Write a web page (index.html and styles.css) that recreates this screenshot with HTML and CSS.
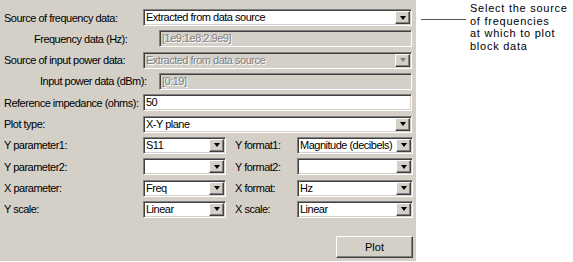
FILE: index.html
```html
<!DOCTYPE html>
<html>
<head>
<meta charset="utf-8">
<link rel="stylesheet" href="styles.css">
</head>
<body>
<div class="page">
  <div class="panel">
    <div class="row">
      <span class="lbl">Source of frequency data:</span>
      <div class="combo wide"><span class="val">Extracted from data source</span><span class="btn"><i class="tri"></i></span></div>
    </div>
    <div class="row">
      <span class="lbl ind1">Frequency data (Hz):</span>
      <div class="field dis narrow"><span class="val">[1e9:1e8:2.9e9]</span></div>
    </div>
    <div class="row">
      <span class="lbl">Source of input power data:</span>
      <div class="combo wide dis"><span class="val">Extracted from data source</span><span class="btn"><i class="tri"></i></span></div>
    </div>
    <div class="row">
      <span class="lbl ind2">Input power data (dBm):</span>
      <div class="field dis narrow"><span class="val">[0:19]</span></div>
    </div>
    <div class="row">
      <span class="lbl">Reference impedance (ohms):</span>
      <div class="field wide"><span class="val">50</span></div>
    </div>
    <div class="row">
      <span class="lbl">Plot type:</span>
      <div class="combo wide"><span class="val">X-Y plane</span><span class="btn"><i class="tri"></i></span></div>
    </div>
    <div class="row">
      <span class="lbl">Y parameter1:</span>
      <div class="combo small"><span class="val">S11</span><span class="btn"><i class="tri"></i></span></div>
      <span class="lbl2">Y format1:</span>
      <div class="combo right"><span class="val">Magnitude (decibels)</span><span class="btn"><i class="tri"></i></span></div>
    </div>
    <div class="row">
      <span class="lbl">Y parameter2:</span>
      <div class="combo small"><span class="val"></span><span class="btn"><i class="tri"></i></span></div>
      <span class="lbl2">Y format2:</span>
      <div class="combo right"><span class="val"></span><span class="btn"><i class="tri"></i></span></div>
    </div>
    <div class="row">
      <span class="lbl">X parameter:</span>
      <div class="combo small"><span class="val">Freq</span><span class="btn"><i class="tri"></i></span></div>
      <span class="lbl2">X format:</span>
      <div class="combo right"><span class="val">Hz</span><span class="btn"><i class="tri"></i></span></div>
    </div>
    <div class="row">
      <span class="lbl">Y scale:</span>
      <div class="combo small"><span class="val">Linear</span><span class="btn"><i class="tri"></i></span></div>
      <span class="lbl2">X scale:</span>
      <div class="combo right"><span class="val">Linear</span><span class="btn"><i class="tri"></i></span></div>
    </div>
    <div class="actions">
      <button class="plot">Plot</button>
    </div>
  </div>
  <div class="note">
    <span class="leader"></span>
    <p class="note-text">Select the source<br>of frequencies<br>at which to plot<br>block data</p>
  </div>
</div>
</body>
</html>
```
FILE: styles.css
```css
* { box-sizing: border-box; }
html, body { margin: 0; padding: 0; background: #fff; }
body {
  font-family: "Liberation Sans", Arial, sans-serif;
  font-size: 11px;
  color: #000;
  width: 573px;
  height: 262px;
  overflow: hidden;
}
.page { display: flex; align-items: flex-start; }
.panel {
  width: 416px;
  height: 261px;
  background: #d4d0c8;
  padding: 9px 0 0 0;
  display: flex;
  flex-direction: column;
}
.row {
  display: flex;
  align-items: center;
  height: 17px;
  margin-bottom: 4.33px;
}
.lbl {
  width: 143px;
  padding-left: 4px;
  white-space: nowrap;
  letter-spacing: -0.5px;
  flex: none;
}
.lbl.ind1 { padding-left: 34px; width: 159px; }
.lbl.ind2 { padding-left: 40px; width: 159px; }
.lbl2 {
  width: 71px;
  padding-left: 9px;
  white-space: nowrap;
  letter-spacing: -0.5px;
  flex: none;
}
.combo, .field {
  height: 17px;
  display: flex;
  align-items: center;
  background: #fff;
  border-style: solid;
  border-width: 1px;
  border-color: #808080 #fff #fff #808080;
  box-shadow: inset 1px 1px 0 #404040, inset -1px -1px 0 #d4d0c8;
  padding: 1px;
  flex: none;
}
.wide { width: 269px; }
.narrow { width: 253px; }
.small { width: 83px; }
.right { width: 116px; }
.val {
  flex: 1;
  padding-left: 1px;
  white-space: nowrap;
  overflow: hidden;
  letter-spacing: -0.5px;
  line-height: 13px;
}
.btn {
  width: 15px;
  height: 13px;
  background: #d4d0c8;
  border-style: solid;
  border-width: 1px;
  border-color: #fff #404040 #404040 #fff;
  box-shadow: inset -1px -1px 0 #808080;
  display: flex;
  align-items: center;
  justify-content: center;
  flex: none;
}
.tri {
  width: 0; height: 0;
  border-left: 3.5px solid transparent;
  border-right: 3.5px solid transparent;
  border-top: 4px solid #000;
}
.dis { background: #d4d0c8; }
.dis .val { color: #808080; text-shadow: 1px 1px 0 #fff; }
.dis .tri { border-top-color: #808080; }
.actions {
  flex: 1;
  display: flex;
  justify-content: flex-end;
  align-items: flex-start;
  padding: 14px 3px 0 0;
}
.plot {
  width: 77px;
  height: 22px;
  font: inherit;
  background: #d4d0c8;
  border-style: solid;
  border-width: 1px;
  border-color: #fff #404040 #404040 #fff;
  box-shadow: inset -1px -1px 0 #808080;
  padding: 0;
  color: #000;
}
.note {
  display: flex;
  align-items: flex-start;
  padding-top: 2px;
  margin-left: 5px;
}
.leader {
  width: 45px;
  height: 0;
  border-top: 1.5px solid #555;
  margin-top: 17px;
  flex: none;
}
.note-text {
  margin: 0 0 0 4px;
  font-family: "Liberation Sans", Arial, sans-serif;
  font-size: 11px;
  line-height: 12.7px;
  letter-spacing: 0.75px;
}
```
